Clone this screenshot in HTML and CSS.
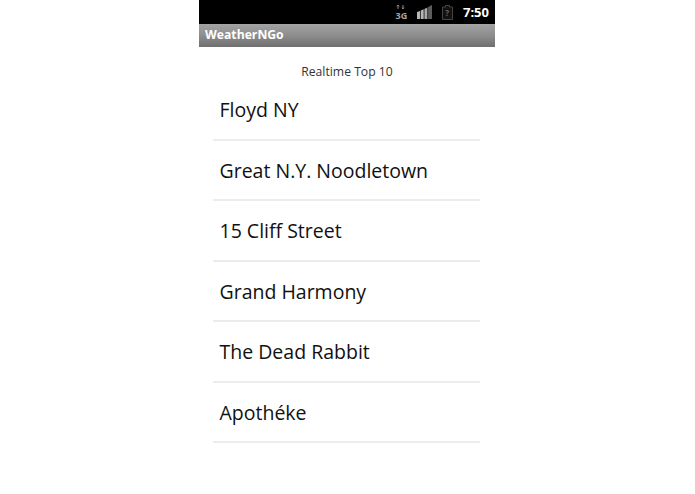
FILE: index.html
```html
<!DOCTYPE html>
<html lang="en">
<head>
    <meta charset="UTF-8">
    <title>WeatherNGo</title>
    <link rel="stylesheet" href="styles.css">
</head>
<body>
    <div class="phone">
        <div class="status-bar">
            <svg class="icon-3g" width="13" height="20" viewBox="0 0 13 20">
                <path d="M3 3v4M2 4.500L3 3l1 1.500M8 3v4M7 5.500L8 7l1-1.500" stroke="#888" fill="none"/>
                <text x="0.500" y="17" class="net-label">3G</text>
            </svg>
            <svg class="icon-signal" width="16" height="14" viewBox="0 0 16 14">
                <path d="M0 7l3-1v8H0zM3.700 5.500l3-1.200V14h-3z" fill="#b5b5b5"/>
                <path d="M7.400 4l3-1.500V14h-3z" fill="#a8a8a8"/>
                <path d="M11.100 2L15 0v14h-3.900z" fill="#5c5c5c"/>
            </svg>
            <svg class="icon-battery" width="11" height="15" viewBox="0 0 11 15">
                <path d="M3.500.5h4v1.500h3v12.500h-10V2h3z" stroke="#444" fill="#111"/>
                <text x="3.300" y="11" class="bat-label">?</text>
            </svg>
            <span class="clock">7:50</span>
        </div>
        <div class="title-bar">WeatherNGo</div>
        <div class="heading">Realtime Top 10</div>
        <ul class="places">
            <li>Floyd NY</li>
            <li>Great N.Y. Noodletown</li>
            <li>15 Cliff Street</li>
            <li>Grand Harmony</li>
            <li>The Dead Rabbit</li>
            <li>Apothéke</li>
        </ul>
    </div>
</body>
</html>
```
FILE: styles.css
```css
body {
    margin: 0;
    background-color: #fff;
    font-family: "Open Sans", "Noto Sans", sans-serif;
}
.phone {
    width: 296px;
    height: 494px;
    margin-left: 199px;
    overflow: hidden;
}
.status-bar {
    display: flex;
    align-items: center;
    justify-content: flex-end;
    height: 24px;
    padding-right: 6px;
    box-sizing: border-box;
    background-color: #000;
}
.icon-3g {
    margin-right: 9px;
}
.icon-signal {
    margin-right: 9px;
}
.icon-battery {
    margin-right: 10px;
}
.net-label {
    font-size: 9px;
    font-weight: 700;
    fill: #a5a5a5;
}
.bat-label {
    font-size: 8px;
    font-weight: 700;
    fill: #666;
}
.clock {
    color: #fff;
    font-size: 13px;
    font-weight: 700;
}
.title-bar {
    height: 23px;
    padding-left: 6px;
    line-height: 21px;
    font-size: 12.200px;
    font-weight: 700;
    color: #fff;
    background: linear-gradient(#a3a3a3, #8d8d8d 50%, #6f6f6f);
}
.heading {
    margin-top: 16px;
    text-align: center;
    font-size: 12.200px;
    line-height: 17px;
    color: #333;
}
.places {
    list-style: none;
    margin: 0 15px 0 14px;
    padding: 0;
}
.places li {
    box-sizing: border-box;
    height: 60.500px;
    line-height: 60px;
    padding-left: 6.500px;
    font-size: 19.500px;
    color: #111;
    border-bottom: 2px solid #ececec;
}
```
